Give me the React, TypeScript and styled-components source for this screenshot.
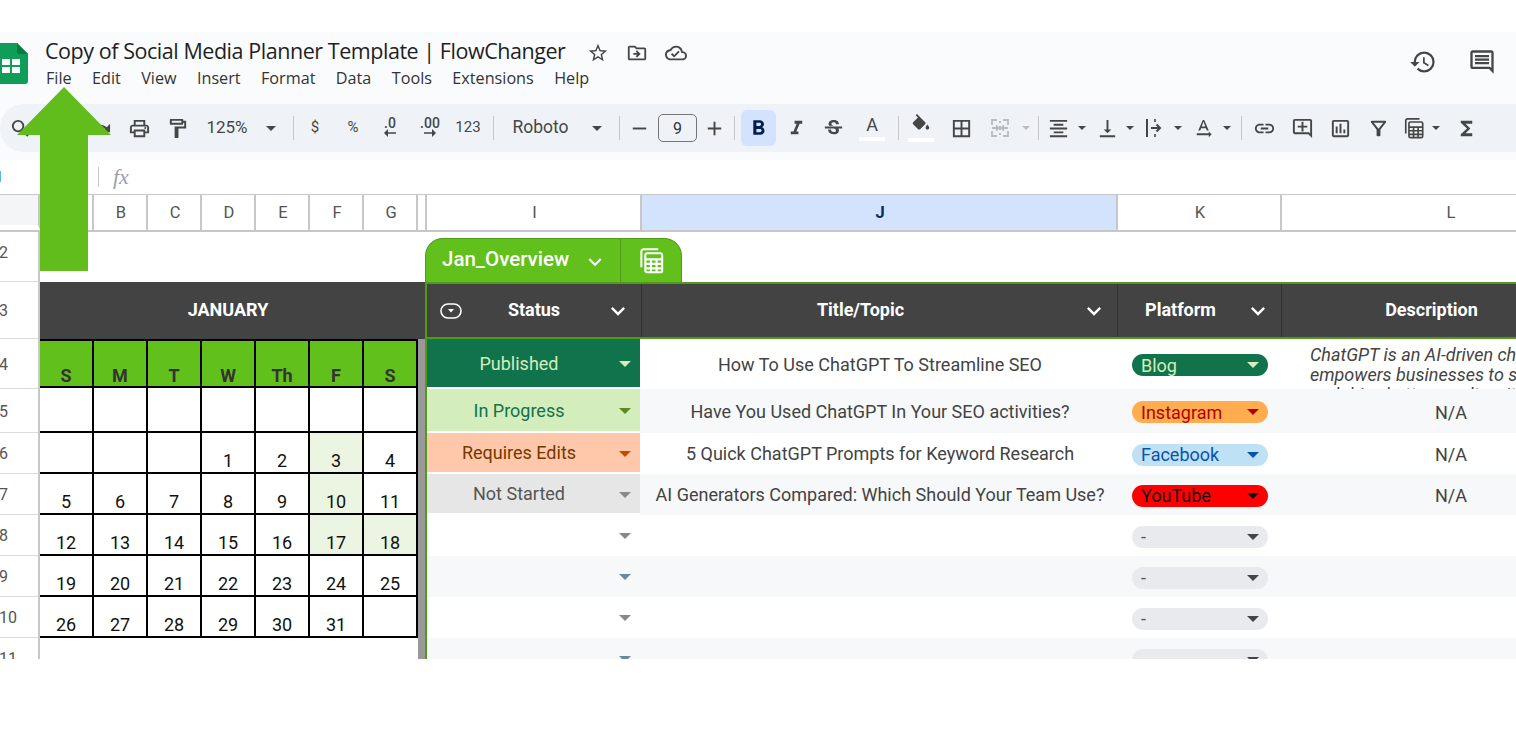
import React from 'react';
import styled, { createGlobalStyle } from 'styled-components';
import {
  MdAdd,
  MdBorderAll,
  MdFormatAlignCenter,
  MdFormatBold,
  MdFormatItalic,
  MdFunctions,
  MdHistory,
  MdKeyboardArrowDown,
  MdLink,
  MdOutlineAddComment,
  MdOutlineCloudDone,
  MdOutlineComment,
  MdOutlineDriveFileMove,
  MdOutlineFilterAlt,
  MdOutlineFormatPaint,
  MdOutlineInsertChart,
  MdOutlinePrint,
  MdOutlineStarBorder,
  MdRedo,
  MdRemove,
  MdSearch,
  MdStrikethroughS,
  MdTextRotationNone,
  MdUndo,
  MdVerticalAlignBottom,
} from 'react-icons/md';

const GlobalStyle = createGlobalStyle`
  html, body {
    margin: 0;
    padding: 0;
    background: #fff;
    overflow: hidden;
  }
  * {
    box-sizing: border-box;
  }
`;

const GREEN = '#61c01c';
const DARK = '#434343';
const LINE = '#c7c7c7';
const TEXT = '#444746';

const Page = styled.div`
  position: relative;
  width: 1516px;
  height: 732px;
  padding-top: 32px;
  overflow: hidden;
  background: #fff;
  font-family: Roboto, sans-serif;
  color: ${TEXT};
`;

const Chrome = styled.div`
  background: #f9fbfd;
  padding-bottom: 8px;
`;

const TopBar = styled.header`
  display: flex;
  align-items: flex-start;
  height: 72px;
  overflow: hidden;
`;

const Logo = styled.svg`
  flex: none;
  width: 34px;
  height: 41px;
  margin: 11px 17px 0 -6px;
`;

const TitleBlock = styled.div`
  display: flex;
  flex-direction: column;
  flex: 1;
`;

const TitleRow = styled.div`
  display: flex;
  align-items: center;
  height: 38px;
`;

const DocTitle = styled.div`
  width: 521px;
  font-family: 'Open Sans', sans-serif;
  font-size: 21.5px;
  letter-spacing: -0.45px;
  line-height: 28px;
  color: #1f1f1f;
  white-space: nowrap;
`;

const TitleIcons = styled.div`
  display: flex;
  align-items: center;
  gap: 17px;
  margin-left: 21px;
  font-size: 22px;
  padding-top: 4px;

  svg {
    display: block;
  }
`;

const Menu = styled.nav`
  display: flex;
  gap: 20.4px;
  margin-top: -4px;
  padding-left: 1px;
  font-family: 'Open Sans', sans-serif;
  font-size: 16.2px;
  line-height: 24px;
  color: #333;
`;

const SideIcons = styled.div`
  display: flex;
  align-items: center;
  gap: 31px;
  margin-top: 16px;
  padding-right: 20px;
  font-size: 28px;

  svg {
    display: block;
  }
`;

const Toolbar = styled.div`
  display: flex;
  align-items: center;
  height: 48px;
  background: #eff3f8;
  border-radius: 24px 0 0 24px;
  white-space: nowrap;
`;

const Tool = styled.div<{ $w: number; $faded?: boolean }>`
  flex: none;
  display: flex;
  align-items: center;
  justify-content: center;
  width: ${({ $w }) => $w}px;
  height: 100%;
  font-size: 23px;
  color: ${({ $faded }) => ($faded ? '#b9bdc1' : TEXT)};

  svg {
    display: block;
  }
`;

const ToolText = styled(Tool)`
  font-size: 17px;
  padding-bottom: 3px;
`;

const FontName = styled(ToolText)`
  padding-right: 4px;
  font-size: 17.5px;
`;

const SmallText = styled(Tool)`
  font-size: 15px;
  padding-bottom: 3px;
`;

const Decimal = styled(Tool)`
  flex-direction: column;
  font-size: 14px;
  font-weight: 500;
  line-height: 12px;
  padding-bottom: 2px;
`;

const ToolSep = styled.div<{ $w: number }>`
  flex: none;
  width: ${({ $w }) => $w}px;
  display: flex;
  justify-content: center;

  &::after {
    content: '';
    width: 1px;
    height: 24px;
    background: #c7c7c7;
  }
`;

const Caret = styled.span<{ $color?: string; $size?: number; $drop?: number }>`
  flex: none;
  width: 0;
  height: 0;
  margin-top: ${({ $drop = 0 }) => $drop}px;
  border-style: solid;
  border-width: ${({ $size = 5 }) => `${$size}px ${$size}px 0`};
  border-color: ${({ $color = TEXT }) => $color} transparent transparent;
`;

const ToolCaret = styled(Tool)`
  font-size: 0;
`;

const MinusTool = styled(Tool)`
  padding-left: 4px;
`;

const SizeBox = styled.div`
  width: 39px;
  height: 28px;
  border: 1px solid #747775;
  border-radius: 5px;
  display: flex;
  align-items: center;
  justify-content: center;
  font-size: 16px;
  color: #333;
`;

const BoldTool = styled(Tool)`
  height: 36px;
  border-radius: 6px;
  background: #d3e3fd;
  color: #041e49;
  font-size: 25px;
`;

const ColorBar = styled.div`
  display: flex;
  flex-direction: column;
  align-items: center;
  font-size: 18px;
  line-height: 20px;

  &::after {
    content: '';
    width: 26px;
    height: 4px;
    margin-top: 2px;
    background: #fff;
  }
`;

const FormulaBar = styled.div`
  display: flex;
  align-items: center;
  height: 34px;
  background: #fff;
`;

const NameBox = styled.div`
  width: 99px;
  height: 20px;
  border-right: 1px solid #c7c7c7;
  font-size: 15px;
  line-height: 20px;
  color: #0b3a82;
  text-indent: -5px;
`;

const Fx = styled.div`
  margin-left: 14px;
  font-family: 'Liberation Serif', serif;
  font-style: italic;
  font-size: 22px;
  color: #9aa0a6;
`;

const ColumnBar = styled.div`
  display: flex;
  height: 38px;
  border-top: 1px solid ${LINE};
  border-bottom: 2px solid ${LINE};
  background: #fff;
`;

const Corner = styled.div`
  flex: none;
  width: 40px;
  background: #f4f5f6;
  border-right: 2px solid ${LINE};
  border-bottom: 5px solid #fff;
`;

const ColumnCell = styled.div<{ $w: number; $active?: boolean }>`
  flex: none;
  width: ${({ $w }) => $w}px;
  display: flex;
  align-items: center;
  justify-content: center;
  padding-left: 2px;
  border-right: 2px solid ${LINE};
  font-size: 16.5px;
  font-weight: ${({ $active }) => ($active ? 700 : 400)};
  color: ${({ $active }) => ($active ? '#0b2d5e' : '#555')};
  background: ${({ $active }) => ($active ? '#d3e3fd' : '#fff')};
`;

const Sheet = styled.div`
  display: flex;
  height: 427px;
  overflow: hidden;
  background: #fff;
`;

const RowNumbers = styled.div`
  flex: none;
  width: 40px;
  border-right: 2px solid ${LINE};
`;

const RowNumber = styled.div<{ $h: number }>`
  height: ${({ $h }) => $h}px;
  display: flex;
  align-items: center;
  padding-top: 1px;
  border-bottom: 1px solid #dcdcdc;
  font-size: 16px;
  color: #555;
  margin-left: -1px;

  &:first-child {
    padding-bottom: 9px;
  }
`;

const LeftPane = styled.div`
  flex: none;
  width: 385px;
`;

const BlankRow = styled.div`
  height: 50px;
`;

const MonthBar = styled.div`
  height: 57px;
  display: flex;
  align-items: center;
  justify-content: center;
  padding-right: 9px;
  padding-bottom: 3px;
  background: ${DARK};
  color: #fff;
  font-size: 18px;
  font-weight: 700;
`;

const CalendarWrap = styled.div`
  display: flex;
  height: 100%;
`;

const Calendar = styled.div`
  flex: none;
  width: 378px;
  display: grid;
  grid-template-columns: repeat(7, 1fr);
  grid-template-rows: 49px 45px 41px 41px 41px 41px 41px;
  align-self: flex-start;
`;

const WeekDay = styled.div`
  display: flex;
  align-items: flex-end;
  justify-content: center;
  background: ${GREEN};
  border-right: 2px solid #000;
  border-top: 2px solid #000;
  border-bottom: 2px solid #000;
  font-size: 18px;
  font-weight: 700;
  color: #333;
`;

const DayCell = styled.div<{ $hl?: boolean }>`
  display: flex;
  align-items: flex-end;
  justify-content: center;
  padding-bottom: 1px;
  background: ${({ $hl }) => ($hl ? '#ebf5e2' : '#fff')};
  border-right: 2px solid #000;
  border-bottom: 2px solid #000;
  font-size: 18px;
  color: #111;
`;

const Divider = styled.div`
  flex: none;
  width: 7px;
  height: 320px;
  background: #999;
`;

const RightPane = styled.div`
  flex: none;
  width: 1194px;
`;

const TabRow = styled.div`
  height: 50px;
  padding-top: 6px;
`;

const Tab = styled.div`
  display: flex;
  width: 257px;
  height: 44px;
  background: ${GREEN};
  border-radius: 18px 18px 0 0;
  border: 1px solid #4f9a18;
  border-bottom: none;
  color: #fff;
`;

const TabName = styled.div`
  flex: none;
  width: 195px;
  display: flex;
  align-items: center;
  padding-left: 16px;
  padding-bottom: 4px;
  font-size: 20.5px;
  font-weight: 500;
  border-right: 1px solid #4f9a18;

  svg {
    margin-left: 13px;
    font-size: 26px;
    margin-top: 6px;
  }
`;

const TabIcon = styled.div`
  flex: 1;
  display: flex;
  align-items: center;
  justify-content: center;
`;

const Table = styled.div`
  border-left: 2px solid #4f9a18;
`;

const columns = '215px 476px 164px 338px';

const HeaderRow = styled.div`
  display: grid;
  grid-template-columns: ${columns};
  height: 57px;
  background: ${DARK};
  border-top: 2px solid #4f9a18;
  border-bottom: 2px solid #4f9a18;
`;

const HeaderCell = styled.div<{ $balanced?: boolean }>`
  display: flex;
  align-items: center;
  padding-left: ${({ $balanced }) => ($balanced ? 38 : 0)}px;
  color: #fff;
  font-size: 18px;
  font-weight: 700;
  position: relative;
  border-right: 1px solid #333;
`;

const HeaderLabel = styled.div`
  flex: 1;
  text-align: center;
  padding-bottom: 3px;
`;

const HeaderChevron = styled.div`
  flex: none;
  width: 38px;
  display: flex;
  justify-content: flex-start;
  padding-left: 1px;
  font-size: 28px;

  svg {
    display: block;
  }
`;

const ColumnTypeIcon = styled.svg`
  position: absolute;
  left: 13px;
  top: 19px;
`;

const Row = styled.div<{ $h: number; $odd: boolean }>`
  display: grid;
  grid-template-columns: ${columns};
  grid-template-rows: minmax(0, 1fr);
  height: ${({ $h }) => $h}px;
  overflow: hidden;
  background: ${({ $odd }) => ($odd ? '#f6f8f9' : '#fff')};
`;

const StatusCell = styled.div<{ $bg?: string; $fg?: string }>`
  display: flex;
  align-items: center;
  margin-right: 2px;
  padding-right: 9px;
  border-bottom: 2px solid ${({ $bg }) => ($bg ? '#fff' : 'transparent')};
  background: ${({ $bg }) => $bg || 'transparent'};
  color: ${({ $fg }) => $fg || TEXT};
  font-size: 18px;
`;

const StatusLabel = styled.div`
  flex: 1;
  text-align: center;
  padding-right: 8px;
`;

const TitleCell = styled.div`
  display: flex;
  align-items: center;
  justify-content: center;
  font-size: 18px;
  color: ${DARK};
  white-space: nowrap;
`;

const PlatformCell = styled.div`
  display: flex;
  align-items: center;
  padding-left: 14px;
  padding-top: 2px;
`;

const Chip = styled.div<{ $bg: string; $fg: string }>`
  width: 136px;
  height: 22px;
  padding: 0 9px;
  display: flex;
  align-items: center;
  justify-content: space-between;
  border-radius: 11px;
  background: ${({ $bg }) => $bg};
  color: ${({ $fg }) => $fg};
  font-size: 18px;
`;

const DescriptionCell = styled.div`
  display: flex;
  align-items: center;
  justify-content: center;
  padding-top: 2px;
  font-size: 18px;
  color: ${DARK};
`;

const LongDescription = styled.div`
  height: 100%;
  overflow: hidden;
  padding: 6px 0 0 28px;
  font-size: 18px;
  font-style: italic;
  line-height: 20px;
  color: ${DARK};
  white-space: nowrap;
`;

const ArrowOverlay = styled.svg`
  position: absolute;
  left: 17px;
  top: 87px;
`;

const TableIcon: React.FC<{ size: number; color: string }> = ({ size, color }) => (
  <svg width={size} height={size} viewBox="0 0 24 24" fill="none" stroke={color} strokeWidth="1.8">
    <path d="M3 18V4a2 2 0 0 1 2-2h13" />
    <rect x="6.500" y="5.500" width="15" height="17" rx="1.500" />
    <path d="M6.500 11h15M6.500 15h15M6.500 19h15M11.500 11v11.500M16.500 11v11.500" />
  </svg>
);

const MergeIcon = () => (
  <svg width="24" height="24" viewBox="0 0 24 24" fill="none" stroke="currentColor" strokeWidth="1.8">
    <path d="M9 4H4v5M15 4h5v5M9 20H4v-5M15 20h5v-5M4 12h6m-2-2.500 2.500 2.500L8 14.500M20 12h-6m2-2.500L13.500 12l2.500 2.500M12 5v2M12 10v4M12 17v2" />
  </svg>
);

const WrapIcon = () => (
  <svg width="24" height="24" viewBox="0 0 24 24" fill="none" stroke="currentColor" strokeWidth="2">
    <path d="M5 3v18" />
    <path d="M9 12h9m-3.500-3.500L18 12l-3.500 3.500" />
    <path d="M13 3v3M13 18v3" strokeWidth="1.6" />
  </svg>
);

const FillIcon = () => (
  <svg width="22" height="22" viewBox="0 0 24 24" fill="currentColor">
    <path d="M16.560 8.940L7.620 0 6.210 1.410l2.380 2.380-5.150 5.150c-.59.59-.59 1.540 0 2.120l5.500 5.500c.29.29.68.44 1.060.44s.77-.15 1.060-.44l5.500-5.500c.59-.58.59-1.530 0-2.120zM19 11.500s-2 2.170-2 3.500c0 1.100.9 2 2 2s2-.9 2-2c0-1.330-2-3.500-2-3.500z" />
  </svg>
);

const ShortArrow: React.FC<{ flip?: boolean }> = ({ flip }) => (
  <svg width="14" height="8" viewBox="0 0 14 8" fill="currentColor" style={{ transform: flip ? 'scaleX(-1)' : undefined }}>
    <path d="M1 3.200h8V0l4 4-4 4V4.800H1z" />
  </svg>
);

const rowHeights = [50, 57, 50, 44, 41, 41, 41, 41, 41, 41];
const rowLabels = ['2', '3', '4', '5', '6', '7', '8', '9', '10', '11'];

const weekDays = ['S', 'M', 'T', 'W', 'Th', 'F', 'S'];
const days: (number | null)[] = [
  null, null, null, null, null, null, null,
  null, null, null, 1, 2, 3, 4,
  5, 6, 7, 8, 9, 10, 11,
  12, 13, 14, 15, 16, 17, 18,
  19, 20, 21, 22, 23, 24, 25,
  26, 27, 28, 29, 30, 31, null,
];
const highlighted = [3, 10, 17, 18];

const letters: [string, number][] = [
  ['', 54], ['B', 54], ['C', 54], ['D', 54], ['E', 54], ['F', 54], ['G', 54], ['', 9],
  ['I', 215], ['J', 476], ['K', 164], ['L', 338],
];

const menuItems = ['File', 'Edit', 'View', 'Insert', 'Format', 'Data', 'Tools', 'Extensions', 'Help'];

interface TaskRow {
  status?: { label: string; bg: string; fg: string };
  caret: string;
  title?: string;
  chip: { label: string; bg: string; fg: string; caret: string };
  description?: string;
}

const emptyChip = { label: '-', bg: '#e8eaed', fg: '#555', caret: '#444' };

const tasks: TaskRow[] = [
  {
    status: { label: 'Published', bg: '#11734b', fg: '#d4edbc' },
    caret: '#d4edbc',
    title: 'How To Use ChatGPT To Streamline SEO',
    chip: { label: 'Blog', bg: '#11734b', fg: '#d4edbc', caret: '#d4edbc' },
  },
  {
    status: { label: 'In Progress', bg: '#d4edbc', fg: '#11734b' },
    caret: '#5a8a1e',
    title: 'Have You Used ChatGPT In Your SEO activities?',
    chip: { label: 'Instagram', bg: '#ffad4f', fg: '#b10202', caret: '#b10202' },
    description: 'N/A',
  },
  {
    status: { label: 'Requires Edits', bg: '#ffc8aa', fg: '#753800' },
    caret: '#c04a00',
    title: '5 Quick ChatGPT Prompts for Keyword Research',
    chip: { label: 'Facebook', bg: '#bfe1f6', fg: '#0a53a8', caret: '#0a53a8' },
    description: 'N/A',
  },
  {
    status: { label: 'Not Started', bg: '#e6e6e6', fg: '#555' },
    caret: '#888',
    title: 'AI Generators Compared: Which Should Your Team Use?',
    chip: { label: 'YouTube', bg: '#ff0000', fg: '#111', caret: '#111' },
    description: 'N/A',
  },
  { caret: '#888', chip: emptyChip },
  { caret: '#6b8a99', chip: emptyChip },
  { caret: '#888', chip: emptyChip },
  { caret: '#6b8a99', chip: emptyChip },
];

const App: React.FC = () => {
  return (
    <Page>
      <GlobalStyle />
      <Chrome>
        <TopBar>
          <Logo viewBox="0 0 34 41">
            <path d="M3 0h20l11 11v27a3 3 0 0 1-3 3H3a3 3 0 0 1-3-3V3a3 3 0 0 1 3-3z" fill="#0f9d58" />
            <path d="M23 0l11 11H25a2 2 0 0 1-2-2z" fill="#0a7a43" />
            <path d="M8 16h18v14H8z" fill="#fff" />
            <path d="M16 16h2v14h-2zM8 22h18v2H8z" fill="#0f9d58" />
          </Logo>
          <TitleBlock>
            <TitleRow>
              <DocTitle>Copy of Social Media Planner Template | FlowChanger</DocTitle>
              <TitleIcons>
                <MdOutlineStarBorder />
                <MdOutlineDriveFileMove />
                <MdOutlineCloudDone />
              </TitleIcons>
            </TitleRow>
            <Menu>
              {menuItems.map((item) => (
                <span key={item}>{item}</span>
              ))}
            </Menu>
          </TitleBlock>
          <SideIcons>
            <MdHistory />
            <MdOutlineComment />
          </SideIcons>
        </TopBar>
        <Toolbar>
          <Tool $w={40}><MdSearch /></Tool>
          <Tool $w={40}><MdUndo /></Tool>
          <Tool $w={40}><MdRedo /></Tool>
          <Tool $w={38}><MdOutlinePrint /></Tool>
          <Tool $w={38}><MdOutlineFormatPaint /></Tool>
          <ToolText $w={62}>125%</ToolText>
          <ToolCaret $w={26}><Caret /></ToolCaret>
          <ToolSep $w={18} />
          <SmallText $w={26}>$</SmallText>
          <SmallText $w={50}>%</SmallText>
          <Decimal $w={24}>.0<ShortArrow flip /></Decimal>
          <Decimal $w={56}>.00<ShortArrow /></Decimal>
          <SmallText $w={20}>123</SmallText>
          <ToolSep $w={30} />
          <FontName $w={69}>Roboto</FontName>
          <ToolCaret $w={40}><Caret /></ToolCaret>
          <ToolSep $w={4} />
          <MinusTool $w={32}><MdRemove /></MinusTool>
          <Tool $w={49}><SizeBox>9</SizeBox></Tool>
          <Tool $w={25}><MdAdd /></Tool>
          <ToolSep $w={14} />
          <BoldTool $w={35}><MdFormatBold /></BoldTool>
          <Tool $w={40}><MdFormatItalic /></Tool>
          <Tool $w={34}><MdStrikethroughS /></Tool>
          <Tool $w={44}><ColorBar>A</ColorBar></Tool>
          <ToolSep $w={8} />
          <Tool $w={38}><ColorBar><FillIcon /></ColorBar></Tool>
          <Tool $w={42}><MdBorderAll /></Tool>
          <Tool $w={36} $faded><MergeIcon /></Tool>
          <ToolCaret $w={15} $faded><Caret $color="#b9bdc1" $size={4} /></ToolCaret>
          <ToolSep $w={10} />
          <Tool $w={30}><MdFormatAlignCenter /></Tool>
          <ToolCaret $w={17}><Caret $size={4} /></ToolCaret>
          <Tool $w={34}><MdVerticalAlignBottom /></Tool>
          <ToolCaret $w={12}><Caret $size={4} /></ToolCaret>
          <Tool $w={36}><WrapIcon /></Tool>
          <ToolCaret $w={12}><Caret $size={4} /></ToolCaret>
          <Tool $w={38}><MdTextRotationNone /></Tool>
          <ToolCaret $w={10}><Caret $size={4} /></ToolCaret>
          <ToolSep $w={18} />
          <Tool $w={28}><MdLink /></Tool>
          <Tool $w={48}><MdOutlineAddComment /></Tool>
          <Tool $w={28}><MdOutlineInsertChart /></Tool>
          <Tool $w={48}><MdOutlineFilterAlt /></Tool>
          <Tool $w={24}><TableIcon size={22} color={TEXT} /></Tool>
          <ToolCaret $w={20}><Caret $size={4} /></ToolCaret>
          <Tool $w={40}><MdFunctions /></Tool>
        </Toolbar>
      </Chrome>
      <FormulaBar>
        <NameBox>1</NameBox>
        <Fx>fx</Fx>
      </FormulaBar>
      <ColumnBar>
        <Corner />
        {letters.map(([letter, width], i) => (
          <ColumnCell key={i} $w={width} $active={letter === 'J'}>{letter}</ColumnCell>
        ))}
      </ColumnBar>
      <Sheet>
        <RowNumbers>
          {rowLabels.map((label, i) => (
            <RowNumber key={label} $h={rowHeights[i]}>{label}</RowNumber>
          ))}
        </RowNumbers>
        <LeftPane>
          <BlankRow />
          <MonthBar>JANUARY</MonthBar>
          <CalendarWrap>
            <Calendar>
              {weekDays.map((day, i) => (
                <WeekDay key={i}>{day}</WeekDay>
              ))}
              {days.map((day, i) => (
                <DayCell key={i} $hl={day !== null && highlighted.includes(day)}>{day}</DayCell>
              ))}
            </Calendar>
            <Divider />
          </CalendarWrap>
        </LeftPane>
        <RightPane>
          <TabRow>
            <Tab>
              <TabName>
                Jan_Overview
                <MdKeyboardArrowDown />
              </TabName>
              <TabIcon><TableIcon size={27} color="#fff" /></TabIcon>
            </Tab>
          </TabRow>
          <Table>
            <HeaderRow>
              <HeaderCell $balanced>
                <ColumnTypeIcon width="22" height="16" viewBox="0 0 22 16" fill="none">
                  <rect x="1" y="1" width="20" height="14" rx="7" stroke="#fff" strokeWidth="1.600" />
                  <path d="M8 6h6l-3 3.500z" fill="#fff" />
                </ColumnTypeIcon>
                <HeaderLabel>Status</HeaderLabel>
                <HeaderChevron><MdKeyboardArrowDown /></HeaderChevron>
              </HeaderCell>
              <HeaderCell>
                <HeaderLabel>Title/Topic</HeaderLabel>
                <HeaderChevron><MdKeyboardArrowDown /></HeaderChevron>
              </HeaderCell>
              <HeaderCell>
                <HeaderLabel>Platform</HeaderLabel>
                <HeaderChevron><MdKeyboardArrowDown /></HeaderChevron>
              </HeaderCell>
              <HeaderCell>
                <HeaderLabel>Description</HeaderLabel>
                <HeaderChevron><MdKeyboardArrowDown /></HeaderChevron>
              </HeaderCell>
            </HeaderRow>
            {tasks.map((task, i) => (
              <Row key={i} $h={rowHeights[i + 2]} $odd={i % 2 === 1}>
                <StatusCell $bg={task.status?.bg} $fg={task.status?.fg}>
                  <StatusLabel>{task.status?.label}</StatusLabel>
                  <Caret $color={task.caret} $size={6} $drop={2} />
                </StatusCell>
                <TitleCell>{task.title}</TitleCell>
                <PlatformCell>
                  <Chip $bg={task.chip.bg} $fg={task.chip.fg}>
                    {task.chip.label}
                    <Caret $color={task.chip.caret} $size={6} />
                  </Chip>
                </PlatformCell>
                {i === 0 ? (
                  <LongDescription>
                    ChatGPT is an AI-driven chatbot that
                    <br />
                    empowers businesses to streamline
                    <br />
                    and drive better results with ChatGPT
                  </LongDescription>
                ) : (
                  <DescriptionCell>{task.description}</DescriptionCell>
                )}
              </Row>
            ))}
          </Table>
        </RightPane>
      </Sheet>
      <ArrowOverlay width="94" height="184" viewBox="0 0 94 184">
        <polygon points="47,0 94,48 71,48 71,184 23,184 23,48 0,48" fill="#61bd1c" />
      </ArrowOverlay>
    </Page>
  );
};

export default App;
